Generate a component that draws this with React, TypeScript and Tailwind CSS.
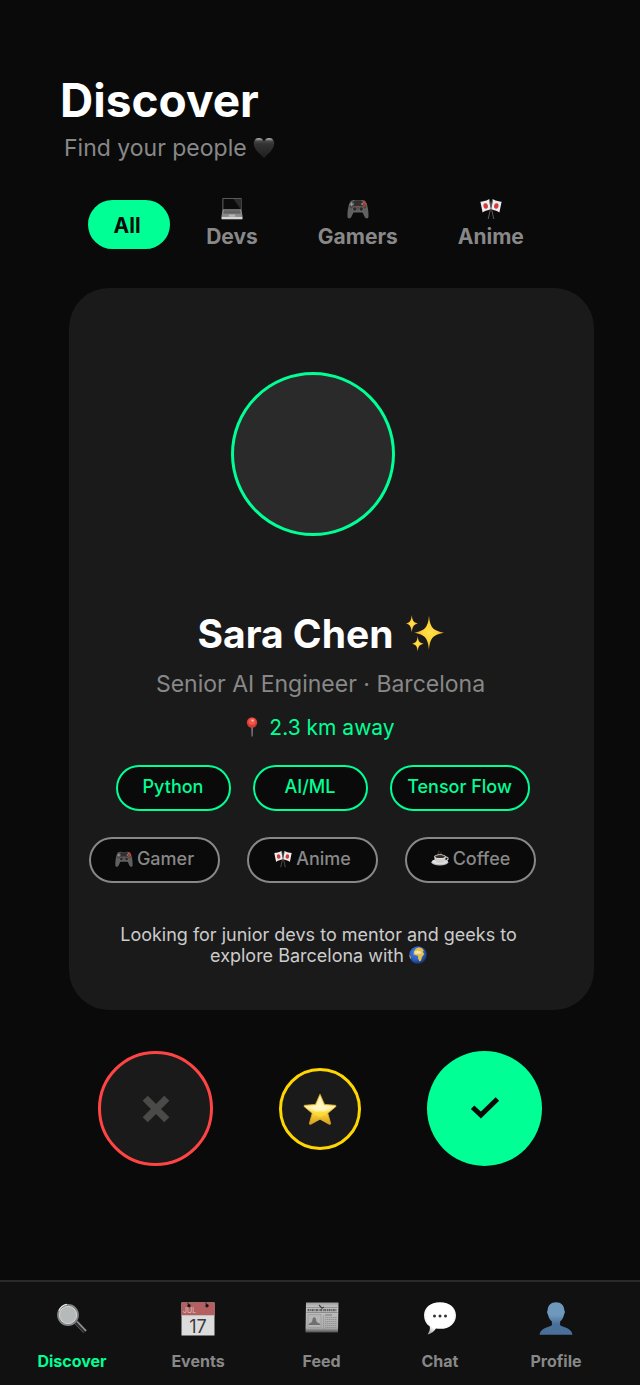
import { ReactNode } from 'react';
import clsx from 'clsx';

type IconProps = { className?: string };

function HeartIcon({ className }: IconProps) {
  return (
    <svg viewBox="0 0 22 22" className={className} aria-hidden="true">
      <defs>
        <linearGradient id="heart" x1="0" y1="0" x2="0" y2="1">
          <stop offset="0" stopColor="#5c5c5c" />
          <stop offset="0.3" stopColor="#333333" />
          <stop offset="1" stopColor="#1f1f1f" />
        </linearGradient>
        <linearGradient id="heart-shine" x1="0" y1="0" x2="0" y2="1">
          <stop offset="0" stopColor="#d8d8d8" />
          <stop offset="1" stopColor="#555555" stopOpacity="0" />
        </linearGradient>
      </defs>
      <path
        d="M11 21C8 17.5 1 13 .8 6.500C.7 3.200 3 1 6 1c2.200 0 4 1.200 5 3.400C12 2.200 13.800 1 16 1c3 0 5.300 2.200 5.200 5.500C21 13 14 17.500 11 21z"
        fill="url(#heart)"
      />
      <ellipse cx="5.800" cy="3" rx="3.600" ry="1.800" fill="url(#heart-shine)" />
      <ellipse cx="16.200" cy="3" rx="3.600" ry="1.800" fill="url(#heart-shine)" />
    </svg>
  );
}

function LaptopIcon({ className }: IconProps) {
  return (
    <svg viewBox="0 0 22 22" className={className} aria-hidden="true">
      <path d="M1.500 .3h19v11.500h-19z" fill="#7a7a7a" />
      <path d="M2.300 1h17.400v10.200H2.300z" fill="#0c0c0c" />
      <path d="M12.500 1h7.200v10.200z" fill="#2c2c2c" />
      <path d="M1.500 11.500h19l1 7H.5z" fill="#8a8a8a" />
      <path d="M3 12.500h16l.5 3h-17z" fill="#4e4e4e" />
      <path d="M3 13.500h16M2.800 14.600h16.400" stroke="#858585" strokeWidth=".4" />
      <path d="M8 16.500h6l.3 2H7.700z" fill="#b5b5b5" />
      <path d="M.5 18.500h21v2.800H.5z" fill="#d6d6d6" />
    </svg>
  );
}

function GamepadIcon({ className }: IconProps) {
  return (
    <svg viewBox="0 0 22 22" className={className} aria-hidden="true">
      <path
        d="M3.500 3.200C5 2 7 1.800 8.500 2.500h5c1.500-.7 3.500-.5 5 .7C20.300 6 21.700 12 21.500 18.500c0 2.600-3 2.400-3.900.3L15.500 14.500h-9l-2.100 4.300c-.9 2.100-3.900 2.300-3.900-.3C.3 12 1.700 6 3.500 3.200z"
        fill="#606060"
      />
      <path d="M4 3.500c4-1.500 10-1.500 14 0l1.500 6c-5 3-12 3-17 0z" fill="#474747" />
      <path d="M6.800 3h8.400v5H6.800z" fill="#303030" />
      <path d="M4.700 4.200v4M2.700 6.200h4" stroke="#a0a0a0" strokeWidth="1" />
      <circle cx="16.900" cy="4.300" r="1.100" fill="#e94b35" />
      <circle cx="15.200" cy="6.100" r="1" fill="#8f8f8f" />
      <circle cx="18.600" cy="6.100" r="1.100" fill="#dd4430" />
      <circle cx="16.900" cy="7.800" r="1.100" fill="#c23b2a" />
      <path d="M9.500 8.500h3" stroke="#c74332" strokeWidth=".9" />
      <circle cx="7.800" cy="11" r="2.200" fill="#292929" stroke="#7c7c7c" strokeWidth=".7" />
      <circle cx="14.200" cy="11" r="2.200" fill="#292929" stroke="#7c7c7c" strokeWidth=".7" />
    </svg>
  );
}

function FlagsIcon({ className }: IconProps) {
  return (
    <svg viewBox="0 0 22 22" className={className} aria-hidden="true">
      <path d="M9.300 1l4.500 20M12.700 1L8.200 21" stroke="#6e6e6e" strokeWidth=".8" />
      <path d="M.4 3.800C3 3 5.500 3.300 9 1.200L10.600 11c-2.600 2-5 .8-8 3.600z" fill="#ededed" />
      <path d="M21.600 3.800C19 3 16.500 3.300 13 1.200L11.400 11c2.600 2 5 .8 8 3.600z" fill="#ededed" />
      <ellipse cx="5.700" cy="8" rx="2.200" ry="2.800" fill="#d63b39" transform="rotate(-12 5.700 8)" />
      <ellipse cx="16.300" cy="8" rx="2.200" ry="2.800" fill="#d63b39" transform="rotate(12 16.300 8)" />
    </svg>
  );
}

function SparklesIcon({ className }: IconProps) {
  return (
    <svg viewBox="0 0 38 38" className={className} aria-hidden="true">
      <defs>
        <radialGradient id="sparkle">
          <stop offset="0" stopColor="#ffe14d" />
          <stop offset="0.5" stopColor="#ffd335" />
          <stop offset="1" stopColor="#d89a2b" />
        </radialGradient>
      </defs>
      <g fill="url(#sparkle)">
        <path d="M23 .5c1.200 11.500 3 14.800 15 17.200-12 2.400-13.800 5.800-15 17.300-1.200-11.500-3-14.900-14.500-17.300C20 15.300 21.800 12 23 .5z" />
        <path d="M5.800 0c.7 5.800 1.600 7.600 6.200 8.500-4.600 1-5.500 3-6.200 9C5 11.500 4.200 9.500 0 8.500 4.200 7.600 5 5.800 5.800 0z" />
        <path d="M11.700 21c.6 5.400 1.500 6.700 6 7.700-4.500 1-5.400 2.400-6 7.800-.6-5.400-1.500-6.800-5.700-7.800 4.200-1 5.100-2.300 5.700-7.700z" />
      </g>
    </svg>
  );
}

function PinIcon({ className }: IconProps) {
  return (
    <svg viewBox="0 0 12 22" className={className} aria-hidden="true">
      <path d="M5.300 9h1.600l-.3 10.500h-1z" fill="#8c8c8c" />
      <circle cx="6" cy="5.500" r="5.200" fill="#d63a36" />
      <circle cx="6" cy="4.400" r="3.500" fill="#ef5a4d" />
      <circle cx="6.600" cy="3.500" r="1.100" fill="#ffd0b5" />
    </svg>
  );
}

function CoffeeIcon({ className }: IconProps) {
  return (
    <svg viewBox="0 0 22 22" className={className} aria-hidden="true">
      <path d="M9 6c-2-2 2-2.500.5-5M12 6c-1-1.600 1.200-2 .3-3.500" fill="none" stroke="#555555" strokeWidth=".9" />
      <ellipse cx="10.800" cy="15" rx="10.300" ry="4" fill="#bdbdbd" />
      <ellipse cx="10.800" cy="14.200" rx="9.500" ry="3.100" fill="#e2e2e2" />
      <path d="M17.500 9c5-1.500 4.500 4-1 4.500" fill="none" stroke="#cccccc" strokeWidth="1.300" />
      <path d="M4 8c0 5.500 2.500 8.300 7 8.300S18 13.500 18 8z" fill="#cfcfcf" />
      <ellipse cx="11" cy="7.800" rx="7" ry="2.600" fill="#f0f0f0" />
      <ellipse cx="11" cy="7.900" rx="5.900" ry="1.900" fill="#3b2a22" />
    </svg>
  );
}

function GlobeIcon({ className }: IconProps) {
  return (
    <svg viewBox="0 0 18 18" className={className} aria-hidden="true">
      <defs>
        <radialGradient id="globe" cx="0.400" cy="0.350" r="0.700">
          <stop offset="0" stopColor="#4b86e8" />
          <stop offset="0.600" stopColor="#2c5cc4" />
          <stop offset="1" stopColor="#173063" />
        </radialGradient>
      </defs>
      <circle cx="9" cy="9" r="8.700" fill="url(#globe)" />
      <path d="M5 5.200L7 2.600l3-1.300 3.200 1.200 1.600 2.300-1 .9 1.400 2.200-2.200 3-1 3.500-1.600 1-1.400-3.200.2-2.200-2.200-.7-2.400-.8z" fill="#e4c04c" />
      <path d="M5.600 5.400l2.800-.8 3.600 1 .8 1.700-4.500.6-2.600-.3z" fill="#f4e4a4" />
      <path d="M.6 8.500l1.300 2.200-.2 2.500C.8 12 .4 10.200.6 8.500z" fill="#d9a934" />
    </svg>
  );
}

function CrossIcon({ className }: IconProps) {
  return (
    <svg viewBox="0 0 28 28" className={className} aria-hidden="true">
      <path d="M3.200 3.200l21.600 21.600M24.800 3.200L3.200 24.800" stroke="#4a4a48" strokeWidth="7.200" />
    </svg>
  );
}

function StarIcon({ className }: IconProps) {
  return (
    <svg viewBox="0 0 34 32" className={className} aria-hidden="true">
      <defs>
        <linearGradient id="star" x1="0" y1="0" x2="0" y2="1">
          <stop offset="0" stopColor="#fff3a0" />
          <stop offset="0.450" stopColor="#fff0a6" />
          <stop offset="0.620" stopColor="#fbd934" />
          <stop offset="1" stopColor="#d6981c" />
        </linearGradient>
      </defs>
      <path
        d="M17 1.200l4.500 10.200 10.800.9c.8.100 1 .8.400 1.400l-7.900 6.600 2.700 10c.2.900-.5 1.400-1.300.9L17 26.200l-9.200 5c-.8.500-1.500 0-1.300-.9l2.700-10L1.300 13.700c-.6-.6-.4-1.300.4-1.400l10.800-.9z"
        fill="url(#star)"
        stroke="#dda92c"
        strokeWidth=".9"
        strokeLinejoin="round"
      />
      <path d="M17 5l3.500 8.200 7.500.8-6 4.500h-10L6 14l7.500-.8z" fill="#fffbe0" opacity=".55" />
      <path d="M10 20.500l7-1.800 7 1.800-7 4z" fill="#ffdf3d" opacity=".6" />
    </svg>
  );
}

function CheckIcon({ className }: IconProps) {
  return (
    <svg viewBox="0 0 30 24" className={className} aria-hidden="true">
      <path d="M2.600 10.200l8.300 7.900L27.400 2" fill="none" stroke="#0a0a0a" strokeWidth="5" />
    </svg>
  );
}

function SearchIcon({ className }: IconProps) {
  return (
    <svg viewBox="0 0 34 34" className={className} aria-hidden="true">
      <path d="M21 20l9.500 9.800" stroke="#2a2a2a" strokeWidth="5" />
      <path d="M22 19.500l9 9.500" stroke="#969696" strokeWidth="1.600" />
      <path d="M19.800 21.500l8.500 9" stroke="#5f5f5f" strokeWidth=".8" />
      <circle cx="13" cy="13" r="9.800" fill="#b6b9b9" stroke="#858585" strokeWidth="2.200" />
      <circle cx="13" cy="13" r="8.600" fill="none" stroke="#d7dada" strokeWidth=".9" />
      <path d="M4 8.800A10.400 10.400 0 0 1 12 2.300" fill="none" stroke="#e8f1f5" strokeWidth="1.100" />
    </svg>
  );
}

function CalendarIcon({ className }: IconProps) {
  return (
    <svg viewBox="0 0 34 34" className={className} aria-hidden="true">
      <path d="M.5.5h33v33H.5z" fill="#dcdcdc" />
      <path d="M.5.5h33v12.700H.5z" fill="#b46060" />
      <path d="M.5 13.500h33" stroke="#bdbdbd" strokeWidth=".6" />
      <circle cx="8" cy="3.800" r="1.700" fill="#171717" />
      <circle cx="26" cy="3.800" r="1.700" fill="#171717" />
      <path d="M8 3.800L6.800.5M26 3.800L24.800.5" stroke="#171717" strokeWidth=".9" />
      <text x="2" y="11" fontSize="7" fill="#d3c9c9" className="font-[Inter,sans-serif] font-normal">
        JUL
      </text>
      <text
        x="17"
        y="31"
        fontSize="18"
        textAnchor="middle"
        fill="#3c3c3c"
        className="font-[Inter,sans-serif] font-normal"
      >
        17
      </text>
    </svg>
  );
}

function NewspaperIcon({ className }: IconProps) {
  return (
    <svg viewBox="0 0 34 34" className={className} aria-hidden="true">
      <defs>
        <linearGradient id="paper" x1="0" y1="0" x2="0" y2="1">
          <stop offset="0" stopColor="#9d9d9d" />
          <stop offset="0.150" stopColor="#c2c2c2" />
          <stop offset="0.850" stopColor="#adadad" />
          <stop offset="1" stopColor="#4c4c4c" />
        </linearGradient>
      </defs>
      <path d="M1 .5h32.500L33 30.500H.5z" fill="url(#paper)" />
      <path d="M1.500 5.600h31M1.500 10.500h31" stroke="#777777" strokeWidth=".7" />
      <path d="M2.500 8.100h29" stroke="#5f5f5f" strokeWidth="2.300" strokeDasharray="2 .7 1 .5" />
      <path d="M14 3l3 3.200 2-1.200" fill="none" stroke="#404040" strokeWidth="1.200" />
      <path d="M3 12.500h13v13H3z" fill="#b5b5b5" stroke="#8c8c8c" strokeWidth=".5" />
      <path d="M3.500 23c2-4 3.500-1 4-5.500.2-3 3.300-3 3.500 0 .4 4.500 3 2 4.500 5.500z" fill="#707070" />
      <path d="M18.500 13v14" stroke="#888888" strokeWidth=".5" />
      <path d="M20 13h7" stroke="#777777" strokeWidth="1" />
      <path
        d="M20 15.500h12M20 17.500h12M20 19.500h12M20 21.500h12M20 23.500h12M20 25.500h12M3 27.500h29"
        stroke="#8b8b8b"
        strokeWidth=".8"
        strokeDasharray="1.500 .5"
      />
    </svg>
  );
}

function ChatIcon({ className }: IconProps) {
  return (
    <svg viewBox="0 0 34 34" className={className} aria-hidden="true">
      <defs>
        <radialGradient id="bubble" cx="0.500" cy="0.400" r="0.620">
          <stop offset="0.700" stopColor="#ffffff" />
          <stop offset="1" stopColor="#b5b5b5" />
        </radialGradient>
      </defs>
      <path
        d="M17 .2C27 .2 33 5.700 33 13.400s-6 13.400-16 13.400c-1.400 0-2.700-.1-4-.4-1.800 2.800-4.600 5-8.400 6 1.800-2.500 2.600-5 2.200-8C3 22 1 18.100 1 13.400 1 5.700 7 .2 17 .2z"
        fill="url(#bubble)"
      />
      <g fill="#333333">
        <circle cx="11.500" cy="14" r="1.500" />
        <circle cx="17" cy="14" r="1.500" />
        <circle cx="22.500" cy="14" r="1.500" />
      </g>
    </svg>
  );
}

function ProfileIcon({ className }: IconProps) {
  return (
    <svg viewBox="0 0 34 34" className={className} aria-hidden="true">
      <defs>
        <linearGradient id="person" x1="0" y1="0" x2="0" y2="1">
          <stop offset="0.400" stopColor="#6f98bd" />
          <stop offset="0.680" stopColor="#4a6f99" />
        </linearGradient>
      </defs>
      <path
        d="M17 .2c5 0 8.300 3 8.300 8 .8.600.8 3-.2 4-.6 3.400-2 5.700-4 7.400v3.400c.8 2.300 11.300 1.700 12.400 9.700H.5c1.100-8 11.600-7.400 12.400-9.700v-3.400c-2-1.700-3.400-4-4-7.400-1-1-1-3.400-.2-4 0-5 3.300-8 8.300-8z"
        fill="url(#person)"
      />
    </svg>
  );
}

const filters = [
  { label: 'Devs', icon: LaptopIcon },
  { label: 'Gamers', icon: GamepadIcon },
  { label: 'Anime', icon: FlagsIcon },
];

const skills = [
  { label: 'Python', width: 'w-[115px]' },
  { label: 'AI/ML', width: 'w-[115px]' },
  { label: 'Tensor Flow', width: 'w-[140px]' },
];

const interests = [
  { label: 'Gamer', icon: GamepadIcon },
  { label: 'Anime', icon: FlagsIcon },
  { label: 'Coffee', icon: CoffeeIcon },
];

const navItems = [
  { label: 'Discover', icon: SearchIcon, active: true },
  { label: 'Events', icon: CalendarIcon },
  { label: 'Feed', icon: NewspaperIcon },
  { label: 'Chat', icon: ChatIcon },
  { label: 'Profile', icon: ProfileIcon },
];

function Pill({ className, children }: { className?: string; children: ReactNode }) {
  return (
    <li
      className={clsx(
        'flex h-[46px] items-center justify-center rounded-full border-2 bg-[#0a0a0a] pb-[2px] text-[18px] leading-6 font-medium whitespace-nowrap',
        className,
      )}
    >
      {children}
    </li>
  );
}

function ProfileCard() {
  return (
    <article className="mt-[38px] mr-[46px] ml-[69px] flex flex-col items-center rounded-[40px] bg-[#1a1a1a] pt-[84px] pr-[42px] pb-[44px] pl-5">
      <div className="pr-4">
        <div className="size-[164px] rounded-full border-3 border-[#00ff94] bg-[#2a2a2a]" />
      </div>
      <h2 className="mt-[74px] flex items-center gap-3 text-[39px] leading-[48px] font-bold text-white">
        Sara Chen
        <SparklesIcon className="size-[38px]" />
      </h2>
      <p className="mt-3 text-[23px] leading-7 text-[#888888]">Senior AI Engineer · Barcelona</p>
      <p className="mt-[17px] flex items-center gap-[11px] text-[21px] leading-[26px] text-[#00ff94]">
        <PinIcon className="h-[22px] w-3" />
        2.3 km away
      </p>
      <ul className="mt-6 flex gap-[22px] pl-1">
        {skills.map(({ label, width }) => (
          <Pill key={label} className={clsx('border-[#00ff94] text-[#00ff94]', width)}>
            {label}
          </Pill>
        ))}
      </ul>
      <ul className="mt-[26px] flex gap-[27px] self-start">
        {interests.map(({ label, icon: Icon }) => (
          <Pill key={label} className="w-[131px] gap-1 border-[#888888] text-[#888888]">
            <Icon className="size-[18px]" />
            {label}
          </Pill>
        ))}
      </ul>
      <p className="mt-[41px] max-w-[420px] pr-1 text-center text-[18px] leading-[21px] text-[#cccccc]">
        Looking for junior devs to mentor and geeks to explore Barcelona with{' '}
        <GlobeIcon className="inline size-[18px] align-[-2px]" />
      </p>
    </article>
  );
}

export default function App() {
  return (
    <div className="flex min-h-screen flex-col bg-[#0a0a0a] font-[Inter,sans-serif]">
      <header className="px-[60px] pt-[72px]">
        <h1 className="text-[46px] leading-[56px] font-bold text-white">Discover</h1>
        <p className="mt-[6px] flex items-center gap-[6px] pl-1 text-[23px] leading-7 text-[#888888]">
          Find your people
          <HeartIcon className="size-[22px]" />
        </p>
      </header>

      <div className="mt-9 flex items-center justify-center gap-3 pr-1 text-[21px] leading-[26px] font-bold">
        <button
          type="button"
          aria-pressed="true"
          className="h-[49px] w-[82px] rounded-full bg-[#00ff94] pt-[3px] pr-1 text-[#0a0a0a]"
        >
          All
        </button>
        {filters.map(({ label, icon: Icon }) => (
          <button
            key={label}
            type="button"
            aria-pressed="false"
            className="flex flex-col items-center gap-1 px-6 text-[#888888]"
          >
            <Icon className="size-[22px]" />
            {label}
          </button>
        ))}
      </div>

      <main>
        <ProfileCard />
        <div className="mt-[41px] flex items-center justify-center gap-[66px]">
          <button
            type="button"
            aria-label="Pass"
            className="flex size-[115px] items-center justify-center rounded-full border-3 border-[#ff4444] bg-[#1a1a1a]"
          >
            <CrossIcon className="size-7" />
          </button>
          <button
            type="button"
            aria-label="Super like"
            className="flex size-[82px] items-center justify-center rounded-full border-3 border-[#ffd700] bg-[#1a1a1a]"
          >
            <StarIcon className="h-8 w-[34px]" />
          </button>
          <button
            type="button"
            aria-label="Like"
            className="flex size-[115px] items-center justify-center rounded-full bg-[#00ff94]"
          >
            <CheckIcon className="h-6 w-[30px]" />
          </button>
        </div>
      </main>

      <nav className="mt-auto grid grid-cols-[124fr_128fr_119fr_118fr_114fr] border-t-2 border-[#2a2a2a] bg-[#111111] pt-5 pr-[27px] pb-[14px] pl-[10px]">
        {navItems.map(({ label, icon: Icon, active }) => (
          <a
            key={label}
            href="#"
            aria-current={active ? 'page' : undefined}
            className={clsx(
              'flex flex-col items-center gap-[15px] text-[16px] leading-5 font-bold',
              active ? 'text-[#00ff94]' : 'text-[#888888]',
            )}
          >
            <Icon className="size-[34px]" />
            {label}
          </a>
        ))}
      </nav>
    </div>
  );
}
